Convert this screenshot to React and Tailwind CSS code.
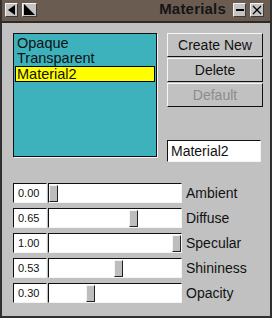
import React from 'react';

const sliders = [
    { label: 'Ambient', value: 0 },
    { label: 'Diffuse', value: 0.65 },
    { label: 'Specular', value: 1 },
    { label: 'Shininess', value: 0.53 },
    { label: 'Opacity', value: 0.3 },
];

const TitleButton = ({ className = '', children }) => (
    <div className={`h-[14px] bg-[#c4c4c4] border border-t-[#f4f4f4] border-l-[#f4f4f4] border-b-[#3a3a3a] border-r-[#3a3a3a] flex items-center justify-center ${className}`}>
        {children}
    </div>
);

const Button = ({ children, disabled }) => (
    <div
        className={`h-[24px] flex items-center justify-center bg-[#c1c1c1] border border-t-[#f6f6f6] border-l-[#f6f6f6] border-b-[#111] border-r-[#111] text-[14px] ${disabled ? 'text-[#8c8c8c]' : 'text-[#111]'}`}
    >
        {children}
    </div>
);

const SliderRow = ({ label, value }) => (
    <div className="flex items-center h-[20px]">
        <div className="w-[34px] h-[20px] bg-white border border-t-[#111] border-l-[#111] border-b-[#f4f4f4] border-r-[#f4f4f4] text-[11px] leading-[18px] pl-[4px] text-[#111]">
            {value.toFixed(2)}
        </div>
        <div className="ml-[1px] w-[134px] h-[20px] bg-white border border-t-[#111] border-l-[#111] border-b-[#f4f4f4] border-r-[#f4f4f4] relative">
            <div
                className="absolute top-[1px] bottom-0 w-[9px] bg-[#bdbdbd] border border-t-[#f4f4f4] border-l-[#f4f4f4] border-b-[#222] border-r-[#222]"
                style={{ left: Math.round(value * 123) }}
            />
        </div>
        <span className="ml-[4px] text-[14px] text-[#111]">{label}</span>
    </div>
);

export default function App() {
    return (
        <div className="w-[272px] h-[318px] bg-[#c1c1c1] border-2 border-t-0 border-[#2f2f2f] flex flex-col font-['Liberation_Sans',Arial,sans-serif] overflow-hidden">
            {/* title bar */}
            <div className="h-[23px] bg-[#6b5c52] border-b-2 border-[#2f2a26] flex items-center px-[3px] pb-[2px]">
                <TitleButton className="w-[13px]">
                    <svg width="7" height="10" viewBox="0 0 7 10"><polygon points="7,0 7,10 0,5" fill="#000" /></svg>
                </TitleButton>
                <TitleButton className="w-[15px] ml-[4px]">
                    <svg width="11" height="11" viewBox="0 0 11 11"><polygon points="0,0 11,11 0,11" fill="#000" /></svg>
                </TitleButton>
                <span className="ml-auto font-bold text-[15px] text-[#151515] tracking-[0.2px]">Materials</span>
                <TitleButton className="w-[13px] ml-[7px]">
                    <div className="w-[8px] h-[2px] bg-black" />
                </TitleButton>
                <TitleButton className="w-[14px] ml-[4px] mr-[3px]">
                    <svg width="10" height="10" viewBox="0 0 10 10"><path d="M1 1L9 9M9 1L1 9" stroke="#000" strokeWidth="1.3" /></svg>
                </TitleButton>
            </div>

            <div className="flex flex-col pl-[11px] pt-[10px]">
                <div className="flex">
                    {/* material list */}
                    <div className="w-[144px] h-[124px] bg-[#3db2bc] border border-[#111] shadow-[1px_1px_0_#f4f4f4] pt-[2px] px-[1px] text-[14.5px] leading-[15px] text-[#111]">
                        <div className="pl-[2px]">Opaque</div>
                        <div className="pl-[2px]">Transparent</div>
                        <div className="h-[16px] bg-[#ffff00] border border-black pl-[1px] leading-[14px]">Material2</div>
                    </div>

                    <div className="ml-[10px] w-[96px] flex flex-col">
                        <div className="flex flex-col gap-[1px]">
                            <Button>Create New</Button>
                            <Button>Delete</Button>
                            <Button disabled>Default</Button>
                        </div>
                        <div className="mt-[33px] w-[94px] h-[22px] bg-white border border-t-[#111] border-l-[#111] border-b-[#f4f4f4] border-r-[#f4f4f4] text-[14px] leading-[20px] pl-[3px] text-[#111]">
                            Material2
                        </div>
                    </div>
                </div>

                <div className="mt-[21px] flex flex-col gap-[5px]">
                    {sliders.map((s) => (
                        <SliderRow key={s.label} label={s.label} value={s.value} />
                    ))}
                </div>
            </div>
        </div>
    );
}
